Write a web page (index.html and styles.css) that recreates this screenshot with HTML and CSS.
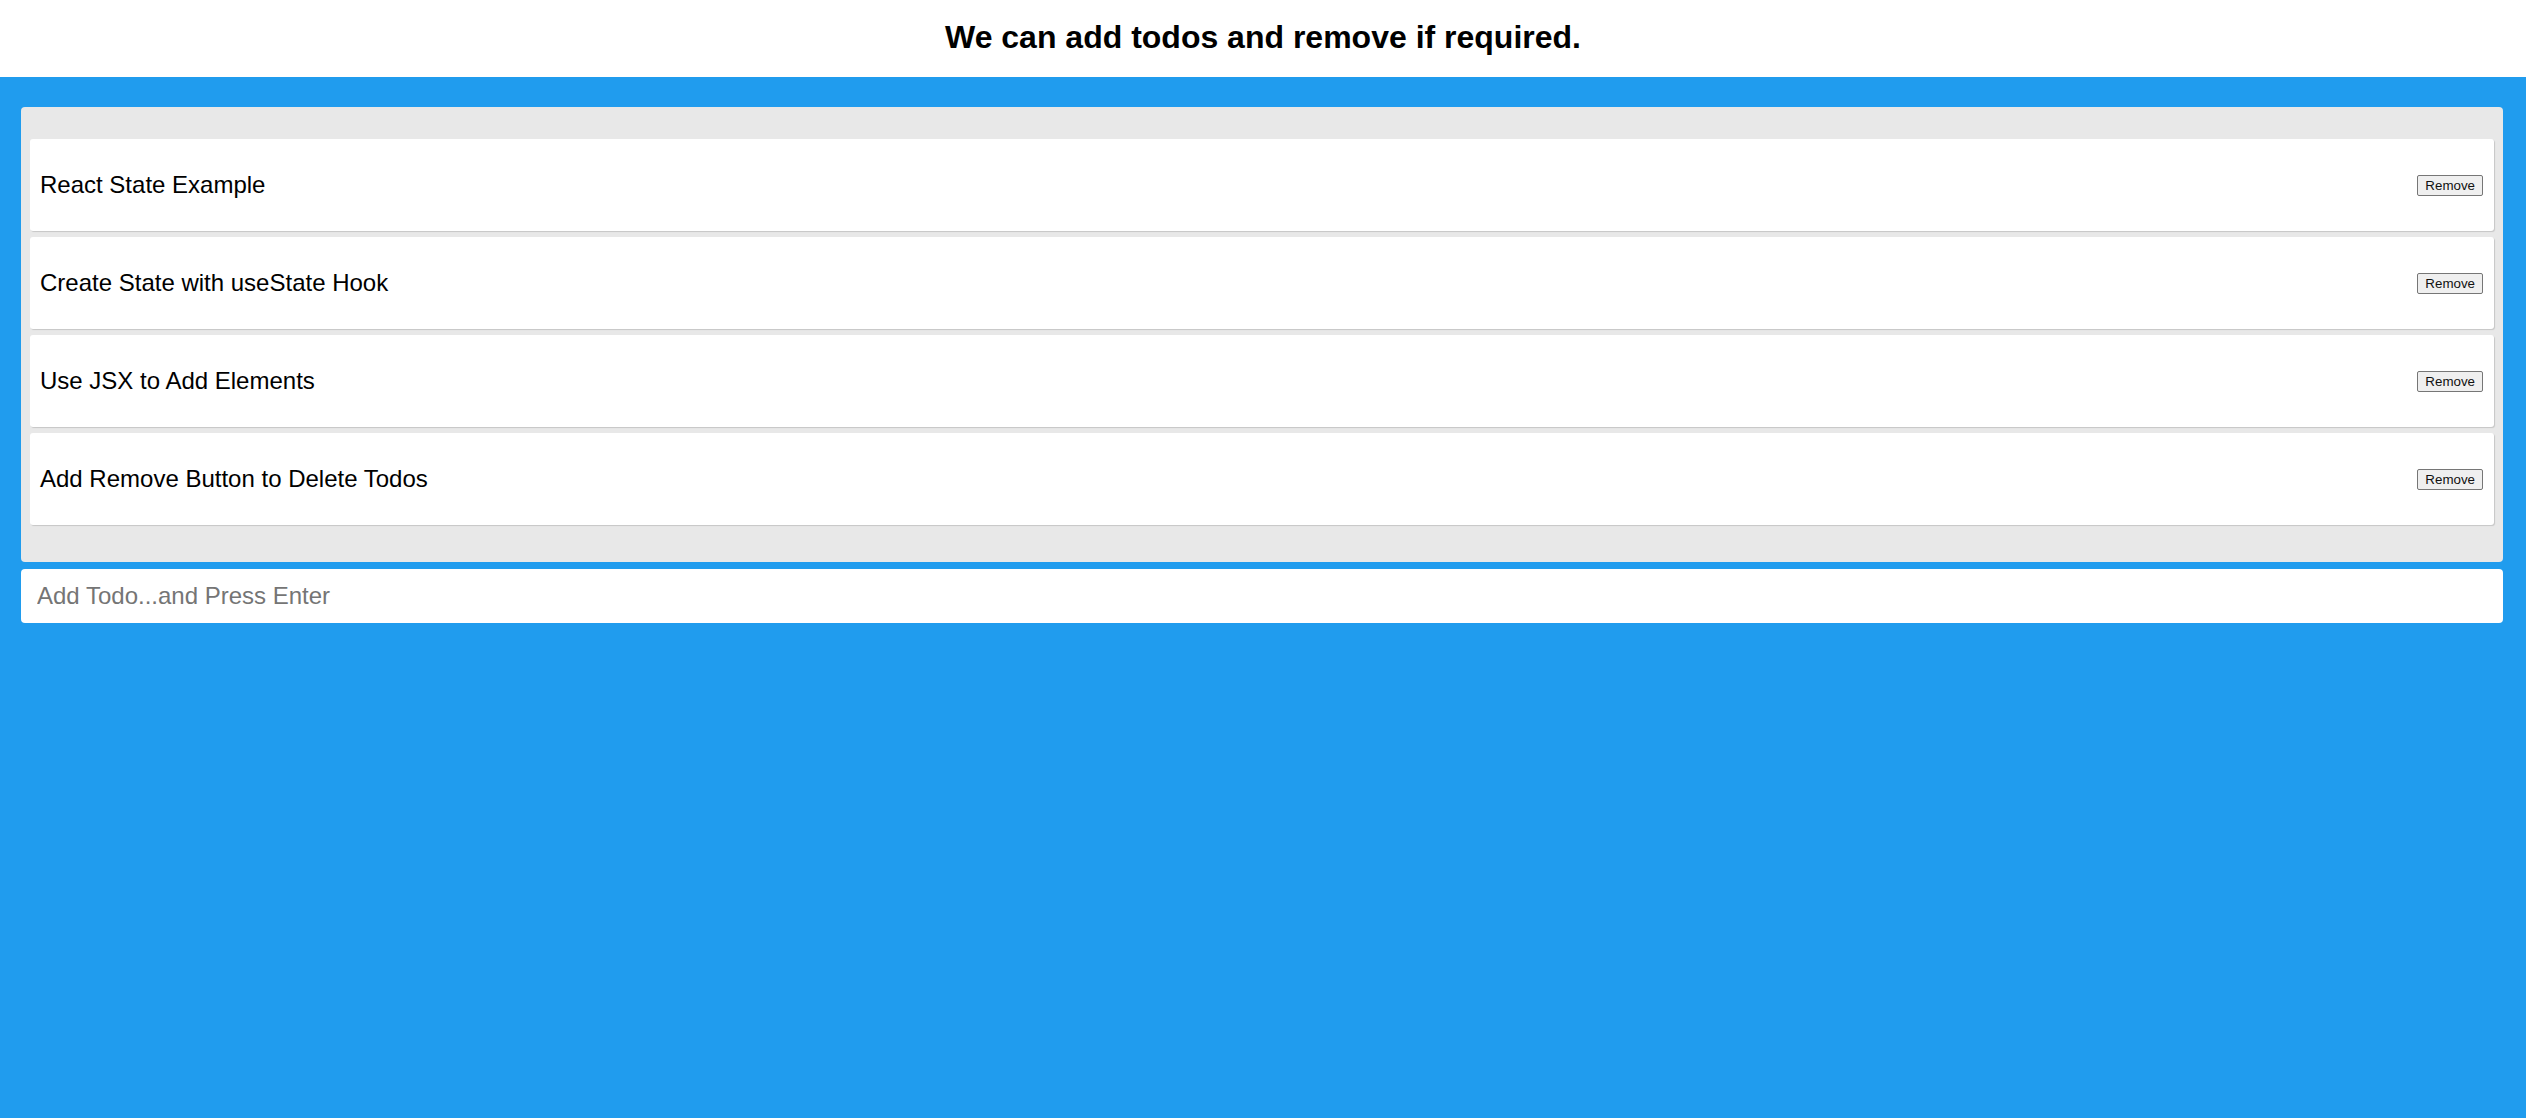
FILE: index.html
```html
<!DOCTYPE html>
<html lang="en">
<head>
<meta charset="utf-8">
<title>Todos</title>
<link rel="stylesheet" href="styles.css">
</head>
<body>
  <header class="page-header">
    <h1 class="title">We can add todos and remove if required.</h1>
  </header>
  <main class="app">
    <div class="todo-list">
      <div class="todo">
        <span class="todo-text">React State Example</span>
        <button class="remove-btn" type="button">Remove</button>
      </div>
      <div class="todo">
        <span class="todo-text">Create State with useState Hook</span>
        <button class="remove-btn" type="button">Remove</button>
      </div>
      <div class="todo">
        <span class="todo-text">Use JSX to Add Elements</span>
        <button class="remove-btn" type="button">Remove</button>
      </div>
      <div class="todo">
        <span class="todo-text">Add Remove Button to Delete Todos</span>
        <button class="remove-btn" type="button">Remove</button>
      </div>
    </div>
    <form class="todo-form">
      <input class="todo-input" type="text" placeholder="Add Todo...and Press Enter">
    </form>
  </main>
</body>
</html>
```
FILE: styles.css
```css
html, body {
  margin: 0;
  padding: 0;
}

body {
  background: #209cee;
  font-family: "Liberation Sans", Arial, sans-serif;
  color: #000;
  min-height: 1118px;
}

.page-header {
  background: #fff;
  height: 77px;
  box-sizing: border-box;
  padding-top: 19px;
}

.title {
  margin: 0;
  text-align: center;
  font-size: 32px;
  font-weight: bold;
  line-height: 37px;
}

.app {
  padding: 30px 23px 0 21px;
}

.todo-list {
  background: #e8e8e8;
  border-radius: 4px;
  padding: 32px 9px 31px;
  margin-bottom: 7px;
}

.todo {
  background: #fff;
  box-shadow: 1px 1px 1px rgba(0, 0, 0, 0.15);
  border-radius: 3px;
  height: 92px;
  box-sizing: border-box;
  padding: 0 11px 0 10px;
  margin-bottom: 6px;
  display: flex;
  align-items: center;
  justify-content: space-between;
}

.todo-text {
  font-size: 24px;
}

.remove-btn {
  font-family: "Liberation Sans", Arial, sans-serif;
  font-size: 13.333px;
  color: #111;
  background: #efefef;
  border: 1px solid #767676;
  border-radius: 2px;
  padding: 1px 7px;
  height: 21px;
  line-height: normal;
}

.todo-form {
  margin: 0;
}

.todo-input {
  display: block;
  width: 100%;
  height: 54px;
  box-sizing: border-box;
  border: none;
  border-radius: 4px;
  background: #fff;
  padding: 0 16px;
  font-family: "Liberation Sans", Arial, sans-serif;
  font-size: 24px;
  color: #000;
  outline: none;
}

.todo-input::placeholder {
  color: #757575;
}
```
